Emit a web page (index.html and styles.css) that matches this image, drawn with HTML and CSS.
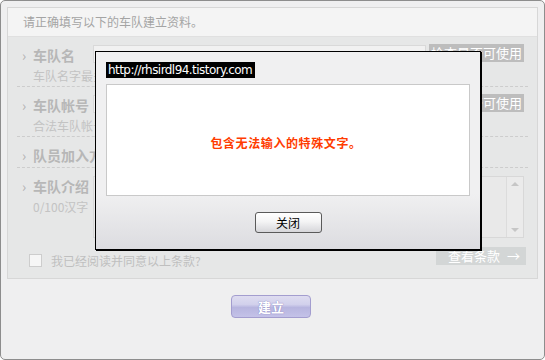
FILE: index.html
```html
<!DOCTYPE html>
<html>
<head>
<meta charset="utf-8">
<link rel="stylesheet" href="styles.css">
</head>
<body>
<div class="frame">
  <div class="panel">
    <div class="head">请正确填写以下的车队建立资料。</div>
    <div class="body">
      <div class="row r1">
        <div class="lbl">
          <div class="title"><span class="arr">&#8250;</span>车队名</div>
          <div class="sub">车队名字最多</div>
        </div>
        <div class="fields">
          <div class="input"></div>
          <div class="chk">检查是否可使用</div>
        </div>
      </div>
      <div class="row r1">
        <div class="lbl">
          <div class="title"><span class="arr">&#8250;</span>车队帐号</div>
          <div class="sub">合法车队帐号</div>
        </div>
        <div class="fields">
          <div class="input"></div>
          <div class="chk">检查是否可使用</div>
        </div>
      </div>
      <div class="row r3">
        <div class="lbl">
          <div class="title"><span class="arr">&#8250;</span>队员加入方式</div>
        </div>
      </div>
      <div class="row r4">
        <div class="lbl">
          <div class="title"><span class="arr">&#8250;</span>车队介绍</div>
          <div class="sub">0/100汉字</div>
        </div>
        <div class="fields">
          <div class="textarea">
            <div class="scroll"><span class="up"></span><span class="down"></span></div>
          </div>
        </div>
      </div>
      <div class="agree">
        <span class="box"></span>
        <span class="agree-text">我已经阅读并同意以上条款?</span>
        <span class="terms">查看条款 <span class="tarr">&#8594;</span></span>
      </div>
    </div>
  </div>
  <div class="actions">
    <div class="build">建立</div>
  </div>
</div>

<div class="modal">
  <div class="mtitle">http://rhsirdl94.tistory.com</div>
  <div class="mbox">包含无法输入的特殊文字。</div>
  <div class="mfoot"><div class="close">关闭</div></div>
</div>
</body>
</html>
```

FILE: styles.css
```css
* { box-sizing: border-box; }
html, body { margin: 0; padding: 0; background: #fff; }
body {
  width: 545px;
  height: 360px;
  position: relative;
  font-family: "Noto Sans CJK SC", "DejaVu Sans", sans-serif;
  font-size: 12px;
  overflow: hidden;
}
.frame {
  width: 545px;
  height: 360px;
  border: 1px solid #8d8d8d;
  border-radius: 5px;
  background: #efeff0;
  padding: 6px;
}
.panel {
  border: 1px solid #d7d7d7;
  background: #e6e7e7;
}
.head {
  height: 29px;
  background: #f4f4f4;
  color: #a4a4a4;
  line-height: 27px;
  padding-left: 15px;
  font-size: 12px;
  border-bottom: 1px solid #e0e0e0;
}
.body {
  padding: 0 9px;
}
.row {
  display: flex;
  border-bottom: 1px dashed #cdcdcd;
  padding-right: 4px;
}
.r1 { height: 50px; }
.r3 { height: 31px; }
.r4 { height: 74px; border-bottom: none; }
.lbl {
  width: 78px;
  flex: none;
  white-space: nowrap;
  overflow: hidden;
  padding-left: 5px;
  padding-top: 9px;
  margin-right: -2px;
}
.title {
  font-size: 14px;
  line-height: 18px;
  font-weight: bold;
  color: #b7b7b7;
}
.arr {
  display: inline-block;
  width: 11px;
  font-weight: normal;
  color: #b0b0b0;
}
.sub {
  margin-top: 4px;
  padding-left: 11px;
  font-size: 12px;
  line-height: 16px;
  color: #c3c3c3;
}
.fields {
  flex: 1;
  display: flex;
  align-items: flex-start;
  gap: 3px;
  padding-top: 7px;
}
.input {
  flex: 1;
  height: 18px;
  background: #f1f1f1;
  border: 1px solid #d9d9d9;
  margin-top: 1px;
}
.chk {
  width: 95px;
  height: 18px;
  background: #bdbdbd;
  color: #fff;
  font-size: 13px;
  line-height: 18px;
  text-align: center;
}
.textarea {
  flex: 1;
  height: 62px;
  margin-top: 1px;
  background: #e9e9e9;
  border: 1px solid #d8d8d8;
  display: flex;
  justify-content: flex-end;
}
.scroll {
  width: 17px;
  border-left: 1px solid #dcdcdc;
  background: #ebebeb;
  position: relative;
}
.up, .down {
  position: absolute;
  left: 4px;
  width: 0;
  height: 0;
  border-left: 4px solid transparent;
  border-right: 4px solid transparent;
}
.up { top: 5px; border-bottom: 4px solid #c6c6c6; }
.down { bottom: 5px; border-top: 4px solid #c6c6c6; }
.agree {
  display: flex;
  align-items: center;
  height: 36px;
  padding: 0 2px 2px 12px;
}
.box {
  width: 13px;
  height: 13px;
  background: #f6f6f6;
  border: 1px solid #cdcdcd;
  margin-top: 2px;
}
.agree-text {
  margin-left: 9px;
  color: #bfbfbf;
  font-size: 12px;
  margin-top: 2px;
}
.terms {
  margin-left: auto;
  width: 90px;
  height: 18px;
  background: #d3d6d6;
  color: #fff;
  font-size: 13px;
  line-height: 18px;
  padding-left: 12px;
  margin-top: -6px;
}
.tarr { margin-left: 4px; }
.actions {
  display: flex;
  justify-content: center;
  padding-top: 16px;
  padding-right: 3px;
}
.build {
  width: 80px;
  height: 23px;
  border: 1px solid #a39dcf;
  border-radius: 4px;
  background: linear-gradient(to bottom, #dedcf0 0%, #d2d1ec 40%, #b7b5df 55%, #c4c2e8 100%);
  color: #fff;
  font-size: 13px;
  font-weight: bold;
  line-height: 21px;
  text-align: center;
  text-shadow: 0 0 1px #8c88c4, 0 0 1px #8c88c4;
}
.modal {
  position: absolute;
  left: 95px;
  top: 51px;
  width: 386px;
  height: 199px;
  border: 1px solid #000;
  box-shadow: 1px 1px 0 #000;
  background: linear-gradient(to bottom, #f0f0f1 0%, #f0f0f1 72%, #dcdce0 100%);
  padding: 10px 9px 0 10px;
}
.mtitle {
  display: inline-block;
  background: #000;
  color: #fff;
  font-family: "DejaVu Sans", sans-serif;
  font-size: 12px;
  letter-spacing: -0.55px;
  line-height: 16px;
  height: 16px;
  padding: 0 3px 0 2px;
  vertical-align: top;
}
.mbox {
  margin-top: 5px;
  width: 364px;
  height: 112px;
  background: #fff;
  border: 1px solid #c9c9c9;
  color: #ff3c00;
  font-weight: bold;
  font-size: 12px;
  letter-spacing: 0.6px;
  display: flex;
  align-items: center;
  justify-content: center;
  padding-right: 4px;
  padding-top: 4px;
}
.mfoot {
  display: flex;
  justify-content: center;
  padding-top: 16px;
  padding-right: 1px;
}
.close {
  width: 67px;
  height: 21px;
  border: 1px solid #5a5a5a;
  border-radius: 3px;
  background: linear-gradient(to bottom, #ffffff 0%, #f4f4f5 45%, #d6d6da 100%);
  color: #000;
  font-size: 12px;
  line-height: 19px;
  text-align: center;
}
```
